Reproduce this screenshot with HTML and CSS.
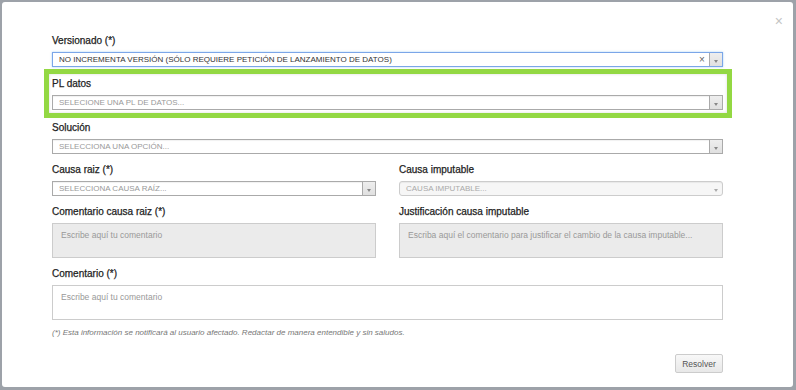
FILE: index.html
```html
<!DOCTYPE html>
<html lang="es">
<head>
    <meta charset="UTF-8">
    <meta name="viewport" content="width=device-width, initial-scale=1.0">
    <title>Resolver incidencia</title>
    <link rel="stylesheet" href="styles.css">
</head>
<body>
    <div class="modal">
        <button class="close" type="button">&times;</button>

        <form class="form">
            <div class="field">
                <label>Versionado (*)</label>
                <div class="select select-focus">
                    <span class="value">NO INCREMENTA VERSIÓN (SÓLO REQUIERE PETICIÓN DE LANZAMIENTO DE DATOS)</span>
                    <span class="clear">&times;</span>
                    <span class="arrow"></span>
                </div>
            </div>

            <div class="highlight">
                <div class="field">
                    <label>PL datos</label>
                    <div class="select">
                        <span class="value placeholder">SELECIONE UNA PL DE DATOS...</span>
                        <span class="arrow"></span>
                    </div>
                </div>
            </div>

            <div class="field after-highlight">
                <label>Solución</label>
                <div class="select">
                    <span class="value placeholder">SELECCIONA UNA OPCIÓN...</span>
                    <span class="arrow"></span>
                </div>
            </div>

            <div class="row">
                <div class="field">
                    <label>Causa raiz (*)</label>
                    <div class="select">
                        <span class="value placeholder">SELECCIONA CAUSA RAÍZ...</span>
                        <span class="arrow"></span>
                    </div>
                </div>
                <div class="field">
                    <label>Causa imputable</label>
                    <div class="select select-disabled">
                        <span class="value placeholder">CAUSA IMPUTABLE...</span>
                        <span class="arrow arrow-plain"></span>
                    </div>
                </div>
            </div>

            <div class="row">
                <div class="field">
                    <label>Comentario causa raiz (*)</label>
                    <textarea class="text text-disabled" placeholder="Escribe aquí tu comentario" disabled></textarea>
                </div>
                <div class="field">
                    <label>Justificación causa imputable</label>
                    <textarea class="text text-disabled" placeholder="Escriba aquí el comentario para justificar el cambio de la causa imputable..." disabled></textarea>
                </div>
            </div>

            <div class="field">
                <label>Comentario (*)</label>
                <textarea class="text" placeholder="Escribe aquí tu comentario"></textarea>
            </div>

            <p class="note">(*) Esta información se notificará al usuario afectado. Redactar de manera entendible y sin saludos.</p>

            <div class="actions">
                <button class="btn" type="button">Resolver</button>
            </div>
        </form>
    </div>
</body>
</html>
```

FILE: styles.css
```css
/* Page behind the modal */
body {
    margin: 0;
    padding: 2px 3px 3px 2px;
    height: 390px;
    box-sizing: border-box;
    background: #9da2a9;
    font-family: "Liberation Sans", Arial, sans-serif;
    color: #333;
}

/* Modal */
.modal {
    position: relative;
    height: 100%;
    background: #fff;
    border-radius: 3px;
}

.close {
    position: absolute;
    top: 12px;
    right: 10px;
    border: none;
    background: none;
    padding: 0;
    font-family: "Liberation Sans", Arial, sans-serif;
    font-size: 14px;
    line-height: 14px;
    color: #c4c4c4;
    cursor: pointer;
}

.form {
    width: 671px;
    margin: 0 0 0 50px;
    padding-top: 32px;
}

/* Fields */
.field {
    margin-top: 9px;
}

.form > .field:first-child {
    margin-top: 0;
}

.field label {
    display: block;
    font-size: 10px;
    line-height: 14px;
    margin-bottom: 4px;
    color: #222;
    -webkit-text-stroke: 0.25px #222;
}

/* Highlight box */
.highlight {
    margin: 2px -9px 0 -8px;
    padding: 3px 4px 3px 3px;
    border: 5px solid #93d843;
    box-shadow: inset 0 0 3px rgba(0, 0, 0, 0.15);
}

.highlight .field {
    margin-top: 0;
}

.field.after-highlight {
    margin-top: 3px;
}

/* Select2-like boxes */
.select {
    display: flex;
    align-items: center;
    height: 15px;
    box-sizing: border-box;
    border: 1px solid #aaa;
    background: #fff;
    box-shadow: inset 0 1px 1px rgba(0, 0, 0, 0.06);
}

.select-focus {
    border-color: #7ba6e8;
    box-shadow: 0 0 2px rgba(82, 168, 236, 0.5);
}

.select .value {
    flex: 1;
    padding-left: 6px;
    font-size: 8px;
    line-height: 13px;
    color: #333;
    white-space: nowrap;
    overflow: hidden;
}

.select .placeholder {
    color: #999;
}

.select .clear {
    width: 12px;
    font-size: 10px;
    line-height: 13px;
    color: #666;
    text-align: center;
    margin-right: 1px;
}

.arrow {
    position: relative;
    width: 12px;
    height: 100%;
    border-left: 1px solid #aaa;
    background: linear-gradient(#eee, #e0e0e0);
}

.arrow::after {
    content: "";
    position: absolute;
    left: 4px;
    bottom: 3px;
    border-left: 2.5px solid transparent;
    border-right: 2.5px solid transparent;
    border-top: 3px solid #888;
}

.select-disabled {
    border-color: #ccc;
    border-radius: 3px;
    background: #f6f6f6;
}

.select-disabled .placeholder {
    color: #aaa;
}

.arrow-plain {
    border-left: none;
    background: none;
}

.arrow-plain::after {
    border-top-color: #aaa;
}

/* Two column rows */
.row {
    display: grid;
    grid-template-columns: 324px 324px;
    column-gap: 23px;
}

/* Text areas */
.text {
    display: block;
    width: 100%;
    height: 35px;
    box-sizing: border-box;
    margin: 0;
    padding: 5px 8px;
    border: 1px solid #ccc;
    background: #fff;
    resize: none;
    font-family: "Liberation Sans", Arial, sans-serif;
    font-size: 8.5px;
    line-height: 12px;
    color: #333;
}

.text::placeholder {
    color: #999;
}

.text-disabled {
    background: #ebebeb;
}

/* Footnote */
.note {
    margin: 7px 0 0;
    font-size: 8px;
    line-height: 12px;
    font-style: italic;
    color: #777;
}

/* Footer button */
.actions {
    display: flex;
    justify-content: flex-end;
    margin-top: 15px;
}

.btn {
    width: 48px;
    height: 19px;
    padding: 0;
    border: 1px solid #ccc;
    border-radius: 2px;
    background: linear-gradient(#f8f8f8, #e8e8e8);
    font-family: "Liberation Sans", Arial, sans-serif;
    font-size: 8.5px;
    color: #555;
    cursor: pointer;
}
```
